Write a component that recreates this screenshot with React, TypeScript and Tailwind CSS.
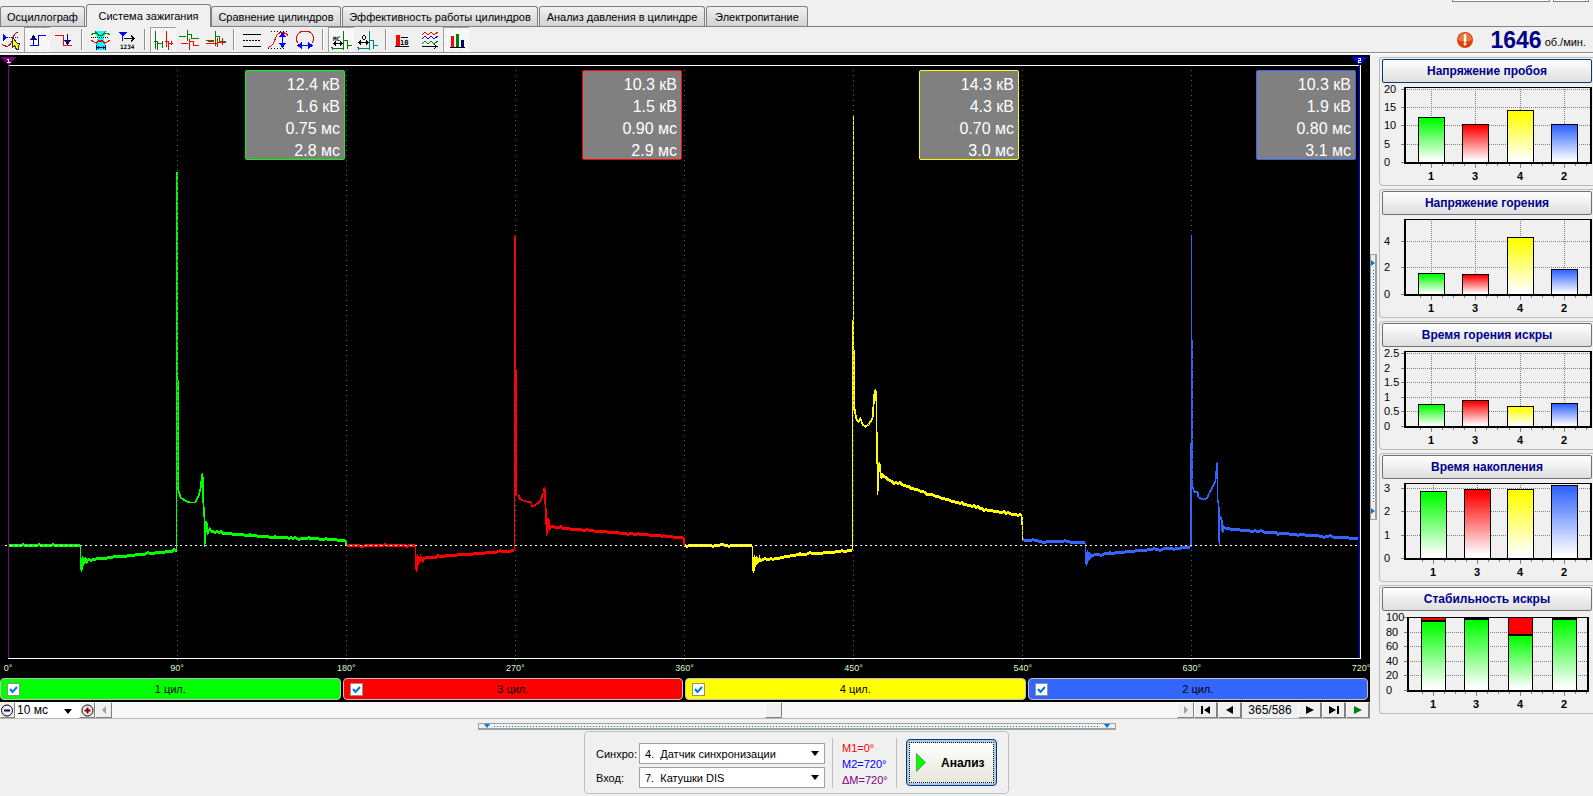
import { ReactNode, useState } from "react";

const TABS = [
  { title: "Осциллограф", width: "w-[85px]" },
  { title: "Система зажигания", width: "w-[125px]" },
  { title: "Сравнение цилиндров", width: "w-[130px]" },
  { title: "Эффективность работы цилиндров", width: "w-[196px]" },
  { title: "Анализ давления в цилиндре", width: "w-[166px]" },
  { title: "Электропитание", width: "w-[102px]" },
];

type Point = [number, number];

type Cylinder = {
  name: string;
  color: string;
  bg: string;
  border: string;
  values: string[];
  // slow parts of the signal, drawn with noise
  slow: Point[][];
  // fast transitions, drawn as they are
  fast: string[];
  // front of the breakdown spike
  front: string;
  spike: string;
};

const CYLINDERS: Cylinder[] = [
  {
    name: "1 цил.",
    color: "#00ff00",
    bg: "bg-[#00ff00]",
    border: "border-[#00ff00]",
    values: ["12.4 кВ", "1.6 кВ", "0.75 мс", "2.8 мс"],
    slow: [
      [[9, 545], [80, 545]],
      [[85, 560], [100, 558], [130, 555], [160, 552], [177, 550]],
      [[211, 531], [225, 533], [250, 535], [275, 537], [310, 538], [345, 540]],
    ],
    fast: [
      "M80 545V557L81 571L82 556L82 566L83 557L84 563L85 557L86 562L88 559",
      "M178 490L180 497L183 499L186 501L190 502L195 502L198 496L200 488L202 473L203 505L204 518V546L205 521L206 521L207 534L209 528L211 531",
      "M345 540L346 546",
    ],
    front: "M176 551V172M178 380V490",
    spike: "M177 172V490",
  },
  {
    name: "3 цил.",
    color: "#ff0000",
    bg: "bg-[#ff0000]",
    border: "border-[#ff0000]",
    values: ["10.3 кВ", "1.5 кВ", "0.90 мс", "2.9 мс"],
    slow: [
      [[347, 545], [415, 545]],
      [[420, 558], [450, 555], [480, 553], [514, 550]],
      [[551, 526], [575, 529], [600, 531], [640, 534], [683, 537]],
    ],
    fast: [
      "M415 545V555L416 571L417 554L417 565L418 556L419 562L420 556L422 561L424 558",
      "M516 495L518 495L520 499L526 501L531 502V506L536 504L540 500L543 492L544 487L545 505L546 526V535L547 518L548 518L549 529L551 526",
      "M683 537L684 545",
    ],
    front: "M514 550V236M516 370V495",
    spike: "M515 236V495",
  },
  {
    name: "4 цил.",
    color: "#ffff00",
    bg: "bg-[#ffff00]",
    border: "border-[#ffff00]",
    values: ["14.3 кВ", "4.3 кВ", "0.70 мс", "3.0 мс"],
    slow: [
      [[685, 545], [752, 545]],
      [[757, 560], [775, 558], [800, 554], [830, 552], [852, 550]],
      [[884, 476], [892, 481], [905, 485], [930, 494], [960, 503], [990, 510], [1021, 515]],
    ],
    fast: [
      "M752 545V557L753 572L754 555L755 566L756 556L757 563L759 557L760 560",
      "M854 408L856 419L858 421L860 418L862 424L865 426L868 424L870 421L872 418L874 392L875 389L876 402V427L877 467V494L878 466L879 462L880 472L881 478L882 474L884 476",
      "M1021 515L1022 525V540",
    ],
    front: "M852 550V320M854 350V408",
    spike: "M853 116V410",
  },
  {
    name: "2 цил.",
    color: "#3366ff",
    bg: "bg-[#3366ff]",
    border: "border-[#3366ff]",
    values: ["10.3 кВ", "1.9 кВ", "0.80 мс", "3.1 мс"],
    slow: [
      [[1023, 540], [1085, 542]],
      [[1089, 555], [1110, 553], [1140, 550], [1170, 548], [1190, 547]],
      [[1225, 528], [1245, 530], [1270, 532], [1310, 535], [1358, 538]],
    ],
    fast: [
      "M1085 542V552L1086 565L1087 550L1088 560L1089 552L1090 557L1092 555",
      "M1192 486L1194 492L1197 491L1198 497L1203 499L1206 498L1209 493L1212 487L1215 480L1216 470L1217 462V500L1218 502L1219 545V520L1220 517L1221 518L1222 532L1223 526L1225 528",
    ],
    front: "M1190 547V443M1191 547V236",
    spike: "M1192 340V487",
  },
];

// signal noise along a polyline, one sample each two pixels
const noisy = (points: Point[]) => {
  let d = "";
  points.slice(1).forEach(([x2, y2], i) => {
    const [x1, y1] = points[i];
    for (let x = x1; x < x2; x += 2) {
      const y = y1 + ((y2 - y1) * (x - x1)) / (x2 - x1);
      const n = Math.round(Math.sin(x * 12.9898) * 43758.5453) % 7;
      d += `${d ? "L" : "M"}${x} ${Math.round(y) + (n === 3 ? 1 : n === -3 ? -1 : 0)}`;
    }
    d += `L${x2} ${y2}`;
  });
  return d;
};

type Chart = {
  title: string;
  grid: [string, number][];
  centers: number[];
  tops: number[];
  left?: number;
  right?: number;
  top?: number;
  stability?: boolean;
};

const CHARTS: Chart[] = [
  {
    title: "Напряжение пробоя",
    grid: [["20", 6], ["15", 24], ["10", 42], ["5", 61], ["0", 79]],
    centers: [51, 95, 140, 184],
    tops: [34, 41, 27, 41],
  },
  {
    title: "Напряжение горения",
    grid: [["4", 26], ["2", 52], ["0", 79]],
    centers: [51, 95, 140, 184],
    tops: [58, 59, 22, 54],
  },
  {
    title: "Время горения искры",
    grid: [["2.5", 6], ["2", 21], ["1.5", 35], ["1", 50], ["0.5", 64], ["0", 79]],
    centers: [51, 95, 140, 184],
    tops: [57, 53, 59, 56],
  },
  {
    title: "Время накопления",
    grid: [["3", 9], ["2", 32], ["1", 56], ["0", 79]],
    centers: [53, 97, 140, 184],
    tops: [12, 10, 10, 6],
  },
  {
    title: "Стабильность искры",
    grid: [["100", 6], ["80", 21], ["60", 35], ["40", 50], ["20", 64], ["0", 79]],
    centers: [53, 96, 140, 184],
    tops: [9, 7, 23, 7],
    left: 28,
    right: 208,
    top: 6,
    stability: true,
  },
];

const LABELS = ["1", "3", "4", "2"];

const ChartPanel = ({ chart, active, onSelect }: { chart: Chart; active: boolean; onSelect: () => void }) => {
  const { left = 25, right = 211, top = 4, stability } = chart;
  const width = stability ? 24 : 26;
  return (
    <section className="h-[129px] rounded-l border border-r-0 border-[#bcbcbc] pt-px">
      <button
        onClick={onSelect}
        className={`ml-[2px] block h-[24px] w-[210px] rounded-xs border bg-gradient-to-b from-white to-[#dedede] text-[12px] font-bold text-[#00008b] ${
          active ? "border-[#003c74]" : "border-[#707070]"
        }`}
      >
        {chart.title}
      </button>
      <svg viewBox="0 0 213 100" className="h-[100px] w-[213px]" shapeRendering="crispEdges">
        <defs>
          {CYLINDERS.map((c, i) => (
            <linearGradient key={i} id={`bar${i}`} x1="0" y1="0" x2="0" y2="1">
              <stop offset="0.05" stopColor={c.color} />
              <stop offset="0.95" stopColor="#fff" />
            </linearGradient>
          ))}
        </defs>
        {chart.grid.map(([label, y]) => (
          <g key={label}>
            <path d={`M${left} ${y}.5H${right}`} stroke="#808080" strokeDasharray="1 1" />
            <path d={`M${left - 4} ${y}.5h4`} stroke="#808080" />
            <text x={stability ? 6 : 4} y={y + 4} className="font-['Liberation_Sans',sans-serif] text-[11px]">
              {label}
            </text>
          </g>
        ))}
        <path d={`M${left - 1}.5 ${top + 2}V79`} stroke="#808080" strokeWidth="2" strokeDasharray="1 3" />
        {chart.centers.map((x, i) => (
          <g key={i}>
            <path d={`M${x}.5 ${top}V79`} stroke="#808080" strokeDasharray="1 1" />
            <path d={`M${x}.5 80v5M${x - 11}.5 80v3M${x + 11}.5 80v3M${x + 22}.5 80v3`} stroke="#808080" />
            {stability && (
              <rect x={x - width / 2 + 0.5} y={top} width={width} height={79 - top} fill="#f00" stroke="#000" />
            )}
            <rect
              x={x - width / 2 + 0.5}
              y={chart.tops[i] + 0.5}
              width={width}
              height={79 - chart.tops[i]}
              fill={`url(#bar${stability ? 0 : i})`}
              stroke="#000"
            />
            {stability && <path d={`M${x - 12} ${chart.tops[i] + 1}h25`} stroke="#000" strokeWidth="2" />}
            <text
              x={x}
              y={97}
              textAnchor="middle"
              className="font-['Liberation_Sans',sans-serif] text-[11px] font-bold"
            >
              {LABELS[i]}
            </text>
          </g>
        ))}
        <path d={`M${left} ${top}.5H${right}`} stroke="#000" />
        <path d={`M${left} ${top}V80H${right}V${top}`} fill="none" stroke="#000" strokeWidth="2" />
      </svg>
    </section>
  );
};

const Tool = ({ x, label, pressed, children }: { x: number; label: string; pressed?: boolean; children: ReactNode }) => (
  <button
    aria-label={label}
    aria-pressed={!!pressed}
    className={`h-[25px] w-[26px] shrink-0 ${
      pressed
        ? "bg-[repeating-conic-gradient(#fff_0_25%,#f0f0f0_0_50%)] bg-[length:2px_2px] shadow-[inset_1px_1px_#a0a0a0]"
        : ""
    }`}
  >
    <svg viewBox={`${x} 27 26 25`} className="h-[25px] w-[26px]" fill="none" shapeRendering="crispEdges">
      {children}
    </svg>
  </button>
);

const Separator = () => (
  <span className="flex h-[25px] w-[11px] shrink-0 justify-center">
    <span className="my-[2px] w-[2px] border-l border-[#909090] bg-white" />
  </span>
);

const Toolbar = () => (
  <div className="flex h-[28px] items-start border-b-2 border-[#f8f8f8]">
    <div className="flex h-[26px] w-full items-start border-b border-[#909090]">
      <div className="-ml-[2px] flex">
        <Tool x={-2} label="Курсор">
          <path d="M3 34v7l4-3.500z" fill="#00f" />
          <path d="M7 37.500h11" stroke="#00f" strokeDasharray="1 1" />
          <path d="M2 44q3 3 6 2q3-1 5-8q2-6 5-6" stroke="#e00000" />
          <path d="M12.500 37.500v10l2-2l2 4h2v-3l1-3h-2z" fill="#ff0" stroke="#303030" />
        </Tool>
        <Tool x={25} label="Фронт" pressed>
          <path d="M31 45.500h8.500V35.500H47" stroke="#00f" />
          <path d="M34.500 46V37" stroke="#000080" />
          <path d="M31 40l3.500-5l3.500 5z" fill="#000080" />
        </Tool>
        <Tool x={51} label="Спад">
          <path d="M56 35.500h8V45.500H73" stroke="#f00" />
          <path d="M68.500 34V42" stroke="#000080" />
          <path d="M65 40l3.500 5l3.500-5z" fill="#000080" />
        </Tool>
        <Separator />
        <Tool x={87} label="Окно накопления">
          <path d="M96 31h9v4l-2 3l2 4v8h-9v-8l2-4l-2-3z" fill="#0ff" />
          <path d="M91 35l3-2h3l2 2h3l2-2h3l3 2M95 31l3 4h5l3-4" stroke="#008000" />
          <path d="M91 37.500h18" stroke="#000" strokeDasharray="1 1" />
          <path d="M91 40l3 2h3l2-2h3l2 2h3l3-2M96 44l3-3h3l3 3" stroke="#f00" />
          <path d="M97 47.500h8M98.500 46v3M103.500 46v3M96.500 45v5M105.500 45v5" stroke="#000080" />
        </Tool>
        <Tool x={113} label="Порядок цилиндров">
          <path d="M119 32h8l-4 5z" fill="#00f" />
          <path d="M122.500 36V41" stroke="#00f" />
          <path d="M124 38.500h10M131 35.500l3 3l-3 3" stroke="#000" />
          <text x="120" y="49" fill="#000" className="font-['DejaVu_Sans_Mono',monospace] text-[6px] font-bold">
            1234
          </text>
        </Tool>
        <Separator />
        <Tool x={149} label="Последовательно" pressed>
          <path d="M154.500 31V49M153 41.500h3M156.500 41V50M156.500 43.500H161M161.500 41V48" stroke="#008000" />
          <path d="M165.500 31V47M164 41.500h3M167.500 41V50M167.500 43.500H172M170.500 41V45" stroke="#f00" />
        </Tool>
        <Tool x={176} label="Парад">
          <path d="M179 36.500h7M187.500 30V41M188 34.500h3M191.500 34V39M191 38.500H199" stroke="#008000" />
          <path d="M181 43.500h7M189.500 39V50M190 41.500h3M193.500 41V46M193 45.500H199" stroke="#f00" />
        </Tool>
        <Tool x={202} label="Наложение">
          <path d="M206 40.500h8M215.500 31V46M216 36.500h3M219.500 36V42M219 41.500H226" stroke="#008000" />
          <path d="M206 43.500h11M208 41.500h6M217.500 38V47M218 42.500H226M222.500 38V45" stroke="#f00" />
        </Tool>
        <Separator />
        <Tool x={238} label="Линии">
          <path d="M242 34.500h18M242 46.500h18" stroke="#000" />
          <path d="M242 40.500h18" stroke="#000" strokeDasharray="2 1" />
        </Tool>
        <Tool x={265} label="Масштаб по вертикали">
          <path d="M271 31.500h17M268 48.500h18" stroke="#000" strokeDasharray="1 2" />
          <path d="M268 47.500q5-1 7-8t7-7q4 0 6 3" stroke="#f00" />
          <path d="M282.500 35V45" stroke="#00f" />
          <path d="M279 37l3.500-5l3.500 5zM279 43l3.500 5l3.500-5z" fill="#00f" />
        </Tool>
        <Tool x={291} label="Масштаб по горизонтали">
          <path d="M298 43c-4-5 0-12 7-12s11 7 7 12" stroke="#f00" />
          <path d="M300 45.500H310" stroke="#00f" />
          <path d="M302 42v7l-5-3.500zM308 42v7l5-3.500z" fill="#00f" />
        </Tool>
        <Separator />
        <Tool x={328} label="Миллисекунды" pressed>
          <text x="333" y="41" fill="#000" className="font-['DejaVu_Sans_Mono',monospace] text-[6px] font-bold">
            МС
          </text>
          <path d="M334 43.500h8M336 41.500l-2 2l2 2M340 41.500l2 2l-2 2" stroke="#000" />
          <path d="M331 47.500h2M332.500 48V50M333 48.500H343M343.500 31V50M344 40.500h3M347.500 40V49M348 45.500h4" stroke="#008000" />
        </Tool>
        <Tool x={354} label="Градусы">
          <path d="M362.500 36v3M365.500 36v3M363 35.500h2M363 39.500h2" stroke="#000" />
          <path d="M359 42.500h9M361 40.500l-2 2l2 2M366 40.500l2 2l-2 2" stroke="#000" />
          <path d="M357 47.500h2M358.500 48V50M359 48.500H369M369.500 31V50M370 40.500h3M373.500 40V49M374 45.500h4" stroke="#008080" />
        </Tool>
        <Separator />
        <Tool x={390} label="Значения">
          <path d="M395 35h4v11h-4z" fill="#f00" />
          <path d="M394 46.500h14M400 37.500h7" stroke="#000" />
          <text x="399" y="45" fill="#000" className="font-['DejaVu_Sans_Mono',monospace] text-[7px] font-bold">
            10
          </text>
        </Tool>
        <Tool x={416} label="Тренды">
          <path d="M421 35l3-3l3 3l3-3l3 3l4-3" stroke="#f00" />
          <path d="M421 39l3-3l3 3l3-3l3 3l4-3" stroke="#00f" />
          <path d="M421 44l3-3l3 3l3-3l3 3l4-3" stroke="#008000" />
          <path d="M421 46.500h15M433 44.500l3 2l-3 2" stroke="#000" />
        </Tool>
        <Tool x={443} label="Диаграммы" pressed>
          <path d="M451 36h3v11h-3z" fill="#f00" />
          <path d="M456 34h3v13h-3z" fill="#008000" />
          <path d="M461 40h3v7h-3z" fill="#000080" />
          <path d="M450 47.500h15" stroke="#000" />
        </Tool>
      </div>
      <div className="ml-auto flex h-[26px] items-center pr-[7px]">
        <svg viewBox="0 0 16 16" className="mr-[17px] size-[16px]">
          <circle cx="8" cy="8" r="8" fill="#d8430c" />
          <path d="M1 8a7 7 0 0 1 14 0q-7 3-14 0z" fill="#e87840" />
          <path d="M8 3v6" stroke="#fff" strokeWidth="2.500" strokeLinecap="round" />
          <circle cx="8" cy="12" r="1.400" fill="#fff" />
        </svg>
        <span className="text-[23px] leading-[26px] font-bold text-[#00008b]">1646</span>
        <span className="ml-[3px] pt-[3px]">об./мин.</span>
      </div>
    </div>
  </div>
);

const Scope = ({ shown }: { shown: boolean[] }) => (
  <div className="relative">
    <svg
      viewBox="0 55 1370 605"
      preserveAspectRatio="none"
      className="block h-[605px] w-full"
      fill="none"
      shapeRendering="crispEdges"
    >
      <path d="M8 65.500H1360M8 658.500H1360" stroke="#fff" />
      {CYLINDERS.map((c, i) =>
        shown[i] ? (
          <g key={c.name} stroke={c.color}>
            {c.slow.map((points, k) => (
              <path key={k} d={noisy(points)} strokeWidth="2.600" transform="translate(0 0.500)" />
            ))}
            <path d={c.fast.join("")} strokeWidth="1.800" transform="translate(0.500 0.500)" />
            <path d={c.front} transform="translate(0.500 0)" />
            <path d={c.spike} strokeDasharray="9 1" transform="translate(0.500 0)" />
          </g>
        ) : null
      )}
      {[177, 346, 515, 684, 853, 1022, 1191].map((x) => (
        <g key={x}>
          <path d={`M${x}.5 70V657`} stroke="#606060" strokeDasharray="1 4" />
          <path d={`M${x}.5 659V662`} stroke="#808080" />
        </g>
      ))}
      <path d="M5 545.500H1360" stroke="#fff" strokeDasharray="2 3" />
      <path d="M8.500 60V658" stroke="#800080" />
      <path d="M1359.500 60V658" stroke="#0000ff" />
      <path d="M1360.500 65V659" stroke="#fff" />
      <path d="M1 57h15l-7.500 8z" fill="#800080" />
      <path d="M1352 57h15l-7.500 8z" fill="#0000ff" />
      <path d="M7 59.500h2M8.500 59v4M7 62.500h4" stroke="#fff" />
      <path d="M1358 58.500h3M1360.500 58v2M1358 60.500h3M1358.500 60v2M1358 62.500h3" stroke="#fff" />
    </svg>
    <div className="absolute top-[15px] right-[14px] left-[8px] grid grid-cols-4">
      {CYLINDERS.map((c) => (
        <div
          key={c.name}
          className={`h-[90px] w-[100px] justify-self-end rounded-xs border bg-[#808080] pt-[3px] pr-[4px] text-right text-[16px] leading-[22px] text-white ${c.border}`}
        >
          {c.values.map((v) => (
            <div key={v}>{v}</div>
          ))}
        </div>
      ))}
    </div>
    <div className="flex h-[18px] justify-between overflow-hidden pt-[2px] pr-[9px] pl-[8px] text-[9px] leading-[12px] text-[#d8f8c8]">
      {[0, 90, 180, 270, 360, 450, 540, 630, 720].map((deg) => (
        <span key={deg} className="flex w-0 justify-center">
          {deg}°
        </span>
      ))}
    </div>
  </div>
);

const NAV = [
  { label: "В начало", d: "M5 4h2v8H5zM14 4v8L8 8z" },
  { label: "Назад", d: "M13 4v8L6 8z" },
];
const NAV_NEXT = [
  { label: "Вперёд", d: "M6 4v8l8-4z" },
  { label: "В конец", d: "M5 4v8l7-4zM13 4h2v8h-2z" },
  { label: "Пуск", d: "M6 4v8l8-4z", green: true },
];

const RAISED = "border border-white border-r-[#808080] border-b-[#808080] bg-[#f0f0f0]";

const NavButton = ({ label, d, green }: { label: string; d: string; green?: boolean }) => (
  <button aria-label={label} className={`flex w-[24px] shrink-0 items-center justify-center border-r-2 ${RAISED}`}>
    <svg viewBox="0 0 20 16" className={`h-[16px] w-[20px] shrink-0 ${green ? "fill-[#008000]" : "fill-black"}`}>
      <path d={d} />
    </svg>
  </button>
);

const DropArrow = ({ className }: { className: string }) => (
  <svg viewBox="0 0 8 5" className={`pointer-events-none absolute h-[5px] w-[8px] ${className}`}>
    <path d="M0 0h8L4 5z" />
  </svg>
);

const FRAME = 365;
const FRAMES = 586;

const ScrollRow = () => (
  <div className="flex h-[17px] border-b border-[#b8b8b8]">
    <button aria-label="Уменьшить" className={`w-[15px] shrink-0 ${RAISED}`}>
      <svg viewBox="0 0 13 13" className="size-[13px]">
        <circle cx="6" cy="6.500" r="5.500" fill="#f0f0f0" stroke="#000" />
        <path d="M3 5.500h6v2H3z" fill="#000080" />
      </svg>
    </button>
    <div className="relative w-[64px] shrink-0 bg-white">
      <select
        aria-label="Развёртка"
        defaultValue="10 мс"
        className="block h-[16px] w-full appearance-none pl-[2px] text-[12px] leading-[16px]"
      >
        <option>10 мс</option>
        <option>20 мс</option>
      </select>
      <DropArrow className="top-[7px] right-[7px]" />
    </div>
    <button aria-label="Увеличить" className={`w-[16px] shrink-0 ${RAISED}`}>
      <svg viewBox="0 0 13 13" className="mx-auto size-[13px]">
        <circle cx="6.500" cy="6.500" r="5.500" fill="#f0f0f0" stroke="#000" />
        <path d="M3.500 5.500h2v-2h2v2h2v2h-2v2h-2v-2h-2z" fill="#800000" />
      </svg>
    </button>
    <button aria-label="Влево" className={`flex w-[17px] shrink-0 items-center justify-center ${RAISED}`}>
      <svg viewBox="0 0 4 8" className="h-[8px] w-[4px] fill-[#a0a0a0]">
        <path d="M4 0v8L0 4z" />
      </svg>
    </button>
    <div className="flex min-w-0 flex-1 bg-[repeating-conic-gradient(#fff_0_25%,#f0f0f0_0_50%)] bg-[length:2px_2px]">
      <div className={`w-[17px] ${RAISED}`} style={{ marginLeft: `calc((100% - 17px) * ${FRAME / FRAMES})` }} />
    </div>
    <button aria-label="Вправо" className={`flex w-[17px] shrink-0 items-center justify-center ${RAISED}`}>
      <svg viewBox="0 0 4 8" className="h-[8px] w-[4px] fill-[#a0a0a0]">
        <path d="M0 0v8l4-4z" />
      </svg>
    </button>
    {NAV.map((n) => (
      <NavButton key={n.label} {...n} />
    ))}
    <span className="w-[56px] shrink-0 text-center text-[12px] leading-[17px]">
      {FRAME}/{FRAMES}
    </span>
    {NAV_NEXT.map((n) => (
      <NavButton key={n.label} {...n} />
    ))}
  </div>
);

const Field = ({ id, label, value }: { id: string; label: string; value: string }) => (
  <div className="flex items-center">
    <label htmlFor={id} className="w-[43px] shrink-0">
      {label}
    </label>
    <div className="relative">
      <select
        id={id}
        defaultValue={value}
        className="block h-[21px] w-[186px] appearance-none border border-[#a0a0a0] bg-white pl-[5px] text-[11px] whitespace-pre"
      >
        <option>{value}</option>
      </select>
      <DropArrow className="top-[8px] right-[6px]" />
    </div>
  </div>
);

const ControlPanel = () => (
  <div className="mx-auto mt-px flex h-[63px] w-[425px] items-center rounded border border-[#c0c0c0] pl-[11px]">
    <div className="flex flex-col gap-[3px] pt-[6px]">
      <Field id="sync" label="Синхро:" value={"4.\u00a0 Датчик синхронизации"} />
      <Field id="input" label="Вход:" value={"7.\u00a0 Катушки DIS"} />
    </div>
    <div className="ml-[7px] flex h-[50px] w-[65px] flex-col border-x border-[#c0c0c0] pt-[2px] pl-[9px] leading-[16px]">
      <span className="text-[#ff0000]">M1=0°</span>
      <span className="text-[#0000ff]">M2=720°</span>
      <span className="text-[#800080]">ΔM=720°</span>
    </div>
    <button className="ml-[9px] h-[47px] w-[91px] rounded-sm border border-[#003c74] bg-[#a8c8f0] p-[2px] text-[12px] font-bold">
      <span className="flex h-full items-center border border-dotted border-black bg-gradient-to-b from-white to-[#e6e6dc] pl-[6px]">
        <svg viewBox="0 0 10 19" className="mr-[15px] h-[19px] w-[10px]">
          <path d="M0.500 0.500v18L9.500 9.500z" fill="#00ff00" stroke="#60a060" />
        </svg>
        Анализ
      </span>
    </button>
  </div>
);

export default function App() {
  const [tab, setTab] = useState(1);
  const [chart, setChart] = useState(0);
  const [shown, setShown] = useState([true, true, true, true]);

  return (
    <div className="min-h-screen bg-[#f0f0f0] font-['Liberation_Sans',Arial,sans-serif] text-[11px] leading-[16px] text-black">
      <nav className="flex h-[27px] items-end border-b border-[#808080]">
        {TABS.map((t, i) => (
          <button
            key={t.title}
            onClick={() => setTab(i)}
            className={`shrink-0 rounded-t-[3px] border border-b-0 border-[#808080] whitespace-nowrap ${t.width} ${
              tab === i
                ? "-mb-px h-[23px] bg-[#f0f0f0]"
                : "mr-px h-[20px] bg-gradient-to-b from-[#f2f2f2] to-[#d4d2d4]"
            }`}
          >
            {t.title}
          </button>
        ))}
        <div className="mr-[4px] ml-auto flex gap-[3px] self-start">
          <span className="h-[2px] w-[98px] border border-t-0 border-[#808080] bg-white" />
          <span className="h-[2px] w-[36px] border border-t-0 border-[#808080] bg-white" />
        </div>
      </nav>
      <Toolbar />
      <main className="flex">
        <div className="min-w-0 flex-1">
          <div className="bg-black pb-[2px]">
            <Scope shown={shown} />
            <div className="grid grid-cols-4 gap-[2px] pr-[2px]">
              {CYLINDERS.map((c, i) => (
                <label
                  key={c.name}
                  className={`relative flex h-[22px] items-center justify-center rounded-sm border border-[#c0c0c0] ${c.bg}`}
                >
                  <input
                    type="checkbox"
                    checked={shown[i]}
                    onChange={() => setShown(shown.map((s, k) => (k === i ? !s : s)))}
                    className="peer absolute left-[6px] size-[13px] appearance-none border border-[#909090] bg-white"
                  />
                  <svg
                    viewBox="0 0 13 13"
                    className="pointer-events-none invisible absolute left-[6px] size-[13px] peer-checked:visible"
                  >
                    <path d="M3 6l2.500 3L10 4" fill="none" stroke="#0078d7" strokeWidth="2" />
                  </svg>
                  {c.name}
                </label>
              ))}
            </div>
          </div>
          <ScrollRow />
        </div>
        <div className="flex w-[9px] shrink-0 items-start pt-[199px]">
          <div className="flex h-[266px] w-[7px] flex-col items-center gap-[4px] border border-r-2 border-[#a0a0a0] py-[5px]">
            <svg viewBox="0 0 4 6" className="h-[6px] w-[4px] shrink-0 fill-[#0078d7]">
              <path d="M0 0v6l4-3z" />
            </svg>
            <span className="w-px flex-1 bg-[repeating-linear-gradient(#0078d7_0_1px,transparent_1px_3px)]" />
            <svg viewBox="0 0 4 6" className="h-[6px] w-[4px] shrink-0 fill-[#0078d7]">
              <path d="M0 0v6l4-3z" />
            </svg>
          </div>
        </div>
        <aside className="flex w-[214px] shrink-0 flex-col gap-[3px] pt-[2px]">
          {CHARTS.map((c, i) => (
            <ChartPanel key={c.title} chart={c} active={chart === i} onSelect={() => setChart(i)} />
          ))}
        </aside>
      </main>
      <div className="mx-auto mt-[4px] flex h-[7px] w-[638px] items-center gap-[4px] border border-b-2 border-[#a0a0a0] px-[5px]">
        <svg viewBox="0 0 6 4" className="h-[4px] w-[6px] fill-[#0078d7]">
          <path d="M0 0h6l-3 4z" />
        </svg>
        <span className="h-px flex-1 bg-[repeating-linear-gradient(90deg,#0078d7_0_1px,transparent_1px_3px)]" />
        <svg viewBox="0 0 6 4" className="h-[4px] w-[6px] fill-[#0078d7]">
          <path d="M0 0h6l-3 4z" />
        </svg>
      </div>
      <ControlPanel />
    </div>
  );
}
